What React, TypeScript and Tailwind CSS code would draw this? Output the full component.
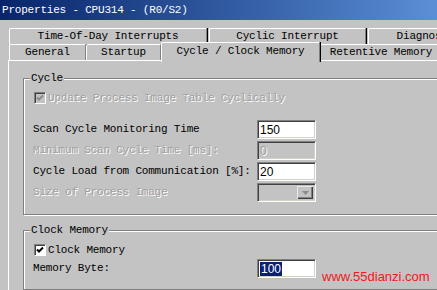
import type { ReactNode } from "react";

type TabProps = { label: string; w: string; active?: boolean };

function Tab({ label, w, active }: TabProps) {
  if (active) {
    return (
      <div
        className={`${w} relative top-[2px] z-10 h-[20px] shrink-0 flex items-center justify-center pb-[3px] bg-[#c3c3c3] border-t border-l border-white rounded-tl-[2px] border-r border-r-[#808080] shadow-[1px_0_0_#000]`}
      >
        {label}
      </div>
    );
  }
  return (
    <div
      className={`${w} h-[16px] shrink-0 flex items-center justify-center border-t border-l border-white rounded-tl-[2px] border-r border-r-[#808080] shadow-[1px_0_0_#000]`}
    >
      {label}
    </div>
  );
}

function Group({ title, h, children }: { title: string; h: string; children: ReactNode }) {
  return (
    <div
      className={`${h} relative w-[440px] border border-[#808080] shadow-[inset_1px_1px_0_#fff,1px_1px_0_#fff] pl-[9px] flex flex-col`}
    >
      <span className="absolute left-[6px] top-[-8px] leading-[14px] px-[1px] bg-[#c3c3c3]">{title}</span>
      {children}
    </div>
  );
}

function CheckBox({ checked, disabled }: { checked: boolean; disabled?: boolean }) {
  return (
    <div
      className={`w-[12px] h-[12px] shrink-0 border border-t-[#808080] border-l-[#808080] border-b-white border-r-white shadow-[inset_1px_1px_0_#404040] flex items-center justify-center ${
        disabled ? "bg-[#c3c3c3]" : "bg-white"
      }`}
    >
      {checked && (
        <svg width="8" height="8" viewBox="0 0 8 8">
          <path d="M1 3.5 L3 5.5 L7 1.5" fill="none" stroke={disabled ? "#8a8a8a" : "#000"} strokeWidth="2" />
        </svg>
      )}
    </div>
  );
}

function Field({ value, disabled, selected }: { value: string; disabled?: boolean; selected?: boolean }) {
  return (
    <div
      className={`w-[59px] h-[19px] shrink-0 flex items-center pl-[2px] border border-t-[#808080] border-l-[#808080] border-b-white border-r-white shadow-[inset_1px_1px_0_#404040,inset_-1px_-1px_0_#d4d0c8] font-['Liberation_Sans',Arial,sans-serif] text-[12px] tracking-normal ${
        disabled ? "bg-[#c3c3c3] text-[#a0a0a0] [text-shadow:1px_1px_0_#fff]" : "bg-white text-black"
      }`}
    >
      {selected ? <span className="bg-[#0a1f78] text-white leading-[14px] px-[1px]">{value}</span> : value}
    </div>
  );
}

function Select() {
  return (
    <div className="w-[59px] h-[19px] shrink-0 flex justify-end border border-t-[#808080] border-l-[#808080] border-b-white border-r-white shadow-[inset_1px_1px_0_#404040,inset_-1px_-1px_0_#d4d0c8] bg-[#c3c3c3] p-[2px]">
      <div className="w-[16px] h-full flex items-center justify-center border-t border-l border-t-[#e8e8e8] border-l-[#e8e8e8] shadow-[inset_-1px_-1px_0_#404040,inset_-2px_-2px_0_#808080]">
        <svg width="7" height="4" viewBox="0 0 7 4">
          <path d="M0 0 H7 L3.5 4 Z" fill="#8a8a8a" />
        </svg>
      </div>
    </div>
  );
}

function Row({ label, disabled, children }: { label: string; disabled?: boolean; children: ReactNode }) {
  return (
    <div className="h-[19px] flex items-center">
      <span
        className={`w-[224px] shrink-0 ${disabled ? "text-[#a0a0a0] [text-shadow:1px_1px_0_#fff]" : ""}`}
      >
        {label}
      </span>
      {children}
    </div>
  );
}

export default function App() {
  return (
    <div className="w-[437px] h-[290px] overflow-hidden bg-[#c3c3c3] font-['Liberation_Mono',monospace] text-[11px] tracking-[-0.2px] text-black">
      <div className="h-[20px] flex items-center pl-[2px] bg-linear-to-r from-[#0a246a] to-[#5b8fd6] text-white whitespace-nowrap">
        Properties - CPU314 - (R0/S2)
      </div>

      <div className="pt-[8px] pl-[9px] w-[560px]">
        <div className="flex h-[16px] gap-[2px]">
          <Tab label="Time-Of-Day Interrupts" w="w-[198px]" />
          <Tab label="Cyclic Interrupt" w="w-[157px]" />
          <Tab label="Diagnostics/Clock" w="w-[166px]" />
        </div>
        <div className="flex h-[16px] items-end">
          <Tab label="General" w="w-[77px]" />
          <Tab label="Startup" w="w-[75px]" />
          <Tab label="Cycle / Clock Memory" w="w-[159px]" active />
          <Tab label="Retentive Memory" w="w-[122px]" />
        </div>
      </div>

      <div className="ml-[8px] w-[470px] h-[240px] border-t border-l border-white pl-[14px] pt-[17px] flex flex-col">
        <Group title="Cycle" h="h-[137px]">
          <div className="mt-[12px] h-[14px] flex items-center gap-[2px] pl-[1px]">
            <CheckBox checked disabled />
            <span className="text-[#a0a0a0] [text-shadow:1px_1px_0_#fff]">Update Process Image Table Cyclically</span>
          </div>
          <div className="mt-[15px] flex flex-col gap-[2px]">
            <Row label="Scan Cycle Monitoring Time">
              <Field value="150" />
            </Row>
            <Row label="Minimum Scan Cycle Time [ms]:" disabled>
              <Field value="0" disabled />
            </Row>
            <Row label="Cycle Load from Communication [%]:">
              <Field value="20" />
            </Row>
            <Row label="Size of Process Image" disabled>
              <Select />
            </Row>
          </div>
        </Group>

        <div className="mt-[15px]">
          <Group title="Clock Memory" h="h-[60px]">
            <div className="mt-[12px] h-[14px] flex items-center gap-[2px] pl-[1px]">
              <CheckBox checked />
              <span>Clock Memory</span>
            </div>
            <div className="mt-[2px] flex items-start">
              <div className="w-[224px] h-[19px] shrink-0 flex items-center">Memory Byte:</div>
              <Field value="100" selected />
              <span className="ml-[6px] mt-[10px] leading-[15px] font-['Liberation_Sans',Arial,sans-serif] text-[13px] tracking-normal text-[#f01818]">
                www.55dianzi.com
              </span>
            </div>
          </Group>
        </div>
      </div>
    </div>
  );
}
